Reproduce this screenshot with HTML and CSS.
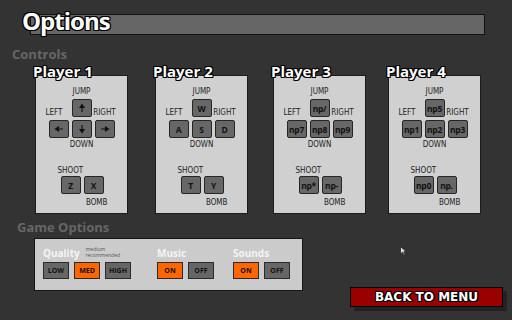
FILE: index.html
```html
<!DOCTYPE html>
<html lang="en">
<head>
  <meta charset="UTF-8">
  <title>Options</title>
  <link rel="stylesheet" href="styles.css">
</head>
<body>
  <div class="titlebar">
    <h1>Options</h1>
  </div>

  <div class="section-label">Controls</div>

  <div class="players">
    <div class="player">
      <h2>Player 1</h2>
      <div class="card">
        <div class="pad">
          <span class="lbl jump">JUMP</span>
          <span class="lbl left">LEFT</span>
          <span class="key up">
            <svg width="10" height="10" viewBox="0 0 10 10"><path d="M5 9V2M3 4.5L5 1.5L7 4.5Z" stroke="#111" stroke-width="1.2" fill="#111"/></svg>
          </span>
          <span class="lbl right">RIGHT</span>
          <span class="key row">
            <svg width="10" height="10" viewBox="0 0 10 10"><path d="M9 5H2M4.5 3L1.5 5L4.5 7Z" stroke="#111" stroke-width="1.2" fill="#111"/></svg>
          </span>
          <span class="key row">
            <svg width="10" height="10" viewBox="0 0 10 10"><path d="M5 1V8M3 5.5L5 8.5L7 5.5Z" stroke="#111" stroke-width="1.2" fill="#111"/></svg>
          </span>
          <span class="key row">
            <svg width="10" height="10" viewBox="0 0 10 10"><path d="M1 5H8M5.5 3L8.5 5L5.5 7Z" stroke="#111" stroke-width="1.2" fill="#111"/></svg>
          </span>
          <span class="lbl down">DOWN</span>
        </div>
        <div class="fire">
          <span class="lbl shoot">SHOOT</span>
          <span class="key">Z</span><span class="key">X</span>
          <span class="lbl bomb">BOMB</span>
        </div>
      </div>
    </div>

    <div class="player">
      <h2>Player 2</h2>
      <div class="card">
        <div class="pad">
          <span class="lbl jump">JUMP</span>
          <span class="lbl left">LEFT</span>
          <span class="key up">W</span>
          <span class="lbl right">RIGHT</span>
          <span class="key row">A</span><span class="key row">S</span><span class="key row">D</span>
          <span class="lbl down">DOWN</span>
        </div>
        <div class="fire">
          <span class="lbl shoot">SHOOT</span>
          <span class="key">T</span><span class="key">Y</span>
          <span class="lbl bomb">BOMB</span>
        </div>
      </div>
    </div>

    <div class="player">
      <h2>Player 3</h2>
      <div class="card">
        <div class="pad">
          <span class="lbl jump">JUMP</span>
          <span class="lbl left">LEFT</span>
          <span class="key up">np/</span>
          <span class="lbl right">RIGHT</span>
          <span class="key row">np7</span><span class="key row">np8</span><span class="key row">np9</span>
          <span class="lbl down">DOWN</span>
        </div>
        <div class="fire">
          <span class="lbl shoot">SHOOT</span>
          <span class="key">np*</span><span class="key">np-</span>
          <span class="lbl bomb">BOMB</span>
        </div>
      </div>
    </div>

    <div class="player">
      <h2>Player 4</h2>
      <div class="card">
        <div class="pad">
          <span class="lbl jump">JUMP</span>
          <span class="lbl left">LEFT</span>
          <span class="key up">np5</span>
          <span class="lbl right">RIGHT</span>
          <span class="key row">np1</span><span class="key row">np2</span><span class="key row">np3</span>
          <span class="lbl down">DOWN</span>
        </div>
        <div class="fire">
          <span class="lbl shoot">SHOOT</span>
          <span class="key">np0</span><span class="key">np.</span>
          <span class="lbl bomb">BOMB</span>
        </div>
      </div>
    </div>
  </div>

  <div class="section-label game">Game Options</div>

  <div class="bottom">
    <div class="panel">
      <div class="group quality">
        <div class="group-head">
          <span class="opt-label">Quality</span>
          <span class="hint"><span>medium</span><span>recommended</span></span>
        </div>
        <div class="buttons">
          <span class="btn">LOW</span>
          <span class="btn on">MED</span>
          <span class="btn">HIGH</span>
        </div>
      </div>
      <div class="group music">
        <div class="group-head"><span class="opt-label">Music</span></div>
        <div class="buttons">
          <span class="btn on">ON</span>
          <span class="btn">OFF</span>
        </div>
      </div>
      <div class="group">
        <div class="group-head"><span class="opt-label">Sounds</span></div>
        <div class="buttons">
          <span class="btn on">ON</span>
          <span class="btn">OFF</span>
        </div>
      </div>
    </div>

    <div class="back">BACK TO MENU</div>
  </div>

  <svg class="cursor" width="7" height="10" viewBox="0 0 7 10">
    <path d="M0.5 0.5V8L2.5 6.2L4 9.2L5.2 8.6L3.8 5.7H6.3Z" fill="#ddd" stroke="#222" stroke-width="0.8"/>
  </svg>
</body>
</html>
```

FILE: styles.css
```css
body {
  margin: 0;
  width: 512px;
  height: 320px;
  overflow: hidden;
  position: relative;
  background-color: #333;
  font-family: "Open Sans", "Liberation Sans", sans-serif;
}

/* white lettering with a hard black outline */
h1, h2, .back {
  color: #fff;
  text-shadow: -1px -1px 0 #000, 1px -1px 0 #000, -1px 1px 0 #000, 1px 1px 0 #000,
               0 1px 0 #000, 1px 0 0 #000, -1px 0 0 #000, 0 -1px 0 #000;
}

.titlebar {
  margin: 14px 27px 0 30px;
  height: 19px;
  background-color: #666;
  border: 1px solid #111;
}

h1 {
  margin: -6px 0 0 -9px;
  font-size: 24px;
  line-height: 24px;
  font-weight: 700;
  letter-spacing: -1px;
}

.section-label {
  margin: 13px 0 0 12px;
  font-size: 13px;
  line-height: 13px;
  font-weight: 700;
  color: #666;
}

.players {
  display: flex;
  margin-top: 3px;
  padding-left: 35px;
}

.player + .player {
  margin-left: 25px;
}

.player:nth-child(2) {
  margin-left: 27px;
}

.player:nth-child(4) {
  margin-left: 22px;
}

.player h2 {
  position: relative;
  z-index: 1;
  margin: 0 0 -4px -2px;
  font-size: 15px;
  line-height: 15px;
  font-weight: 700;
}

.card {
  width: 91px;
  height: 137px;
  background-color: #d0d0d0;
  border: 1px solid #1c1c1c;
}

.lbl {
  font-family: "DejaVu Sans Condensed", "DejaVu Sans", sans-serif;
  font-stretch: condensed;
  font-size: 8px;
  line-height: 8px;
  color: #1e1e1e;
  white-space: nowrap;
}

.key {
  display: flex;
  align-items: center;
  justify-content: center;
  box-sizing: border-box;
  width: 20px;
  height: 18px;
  background-color: #676767;
  border: 1px solid #262626;
  border-radius: 2px;
  font-size: 8.5px;
  font-weight: 700;
  letter-spacing: -0.3px;
  color: #111;
}

.pad {
  display: grid;
  grid-template-columns: 20px 20px 20px;
  grid-template-rows: 8px 18px 18px 8px;
  gap: 3px;
  justify-content: center;
  padding-top: 12px;
}

.jump { grid-column: 2; grid-row: 1; justify-self: center; }
.left { grid-column: 1; grid-row: 2; align-self: end; justify-self: start; margin-left: -3px; }
.up { grid-column: 2; grid-row: 2; }
.right { grid-column: 3; grid-row: 2; align-self: end; justify-self: center; }
.pad .row { grid-row: 3; }
.down { grid-column: 2; grid-row: 4; justify-self: center; }

.fire {
  display: grid;
  grid-template-columns: 20px 20px;
  grid-template-rows: 9px 23px 8px;
  column-gap: 3px;
  justify-content: center;
  margin-top: 18px;
  padding-left: 1px;
}

.shoot { grid-column: 1 / 3; grid-row: 1; justify-self: start; margin-left: -3px; }
.fire .key { grid-row: 2; align-self: start; }
.bomb { grid-column: 1 / 3; grid-row: 3; justify-self: end; margin-right: -4px; }

.game {
  margin: 7px 0 0 17px;
}

.bottom {
  display: flex;
  align-items: flex-start;
  margin-top: 4px;
  padding-left: 34px;
}

.panel {
  display: flex;
  box-sizing: border-box;
  width: 269px;
  height: 53px;
  padding: 8px 0 0 8px;
  background-color: #cbcbcb;
  border: 1px solid #151515;
}

.group-head {
  display: flex;
  align-items: flex-start;
  height: 12px;
  margin-bottom: 3px;
}

.opt-label {
  font-size: 10px;
  line-height: 12px;
  font-weight: 700;
  color: #f4f4f4;
}

.hint {
  display: flex;
  flex-direction: column;
  margin: -1px 0 0 6px;
  font-size: 5px;
  line-height: 6px;
  color: #555;
}

.quality { margin-right: 26px; }
.music { margin-right: 19px; }

.buttons {
  display: flex;
  gap: 5px;
}

.btn {
  display: flex;
  align-items: center;
  justify-content: center;
  box-sizing: border-box;
  width: 26px;
  height: 17px;
  background-color: #666;
  border: 1px solid #2a2a2a;
  font-size: 7px;
  font-weight: 700;
  color: #111;
}

.btn.on {
  background-color: #ff6600;
}

.back {
  box-sizing: border-box;
  width: 153px;
  height: 20px;
  margin: 49px 9px 0 auto;
  background-color: #990000;
  border: 1px solid #000;
  box-shadow: 4px 4px 0 #222;
  font-family: "DejaVu Sans", sans-serif;
  font-size: 12px;
  line-height: 18px;
  font-weight: 700;
  text-align: center;
}

.cursor {
  position: absolute;
  left: 400px;
  top: 246px;
}
```
